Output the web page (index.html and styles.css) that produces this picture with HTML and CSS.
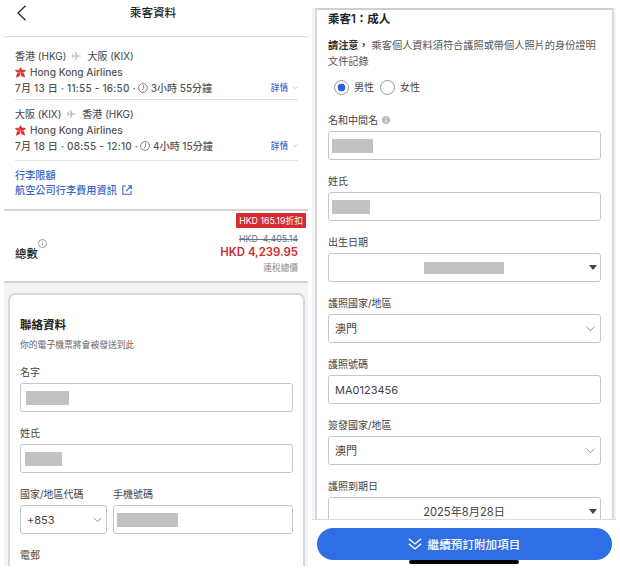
FILE: index.html
```html
<!DOCTYPE html>
<html lang="zh-Hant">
<head>
<meta charset="utf-8">
<title>乘客資料</title>
<link rel="stylesheet" href="styles.css">
</head>
<body>
<div class="screens">

	<!-- 行程及聯絡資料 -->
	<div class="phone phone-left">
		<div class="topbar">
			<svg class="back" width="10" height="16" viewBox="0 0 10 16"><path d="M8.5 .8 1 8l7.5 7.2" fill="none" stroke="#222" stroke-width="1.2"/></svg>
			<h1>乘客資料</h1>
		</div>

		<div class="trips">
			<div class="flight">
				<div class="route"><span>香港 (HKG)</span>
					<svg class="plane" width="9" height="8" viewBox="0 0 9 8"><path d="M0 1.8h.8L2 3.4h1.8L2.8 0h.9l2.2 3.4h2.2q.9.1.9.6t-.9.6H5.9L3.7 8h-.9l1-3.4H2L.8 6.2H0L.7 4z" fill="#b9bcc2"/></svg>
					<span>大阪 (KIX)</span></div>
				<div class="airline">
					<svg width="11" height="11" viewBox="0 0 11 10"><path d="M5.5 4.8 4 2.4 5.6 0l1.5 2.4zM5.7 4.9 7.2 2.6l3.6.1L9 4.8zM5.7 5.2l3.1.7 1 3.9-3.3-1.4zM5.3 5.2 4.5 8.4 1.2 9.9l1-4zM5.3 4.9 2 4.8.1 2.6l3.6.1z" fill="#d92d35" stroke="#d92d35" stroke-width=".4"/></svg>
					<span>Hong Kong Airlines</span></div>
				<div class="times"><span class="t1">7月 13 日 · 11:55 - 16:50 ·</span>
					<svg width="10" height="10" viewBox="0 0 10 10" fill="none" stroke="#666" stroke-width=".8"><circle cx="5" cy="5" r="4.4"/><path d="M5.6 2.2v3L4 7.2"/></svg>
					<span class="t2">3小時 55分鐘</span>
					<a class="detail">詳情</a>
					<svg class="mini" width="5" height="4" viewBox="0 0 5 4"><path d="M.3.7l2.2 2L4.7.7" fill="none" stroke="#a9bcd8" stroke-width=".8"/></svg></div>
			</div>
			<div class="flight second">
				<div class="route"><span>大阪 (KIX)</span>
					<svg class="plane" width="9" height="8" viewBox="0 0 9 8"><path d="M0 1.8h.8L2 3.4h1.8L2.8 0h.9l2.2 3.4h2.2q.9.1.9.6t-.9.6H5.9L3.7 8h-.9l1-3.4H2L.8 6.2H0L.7 4z" fill="#b9bcc2"/></svg>
					<span>香港 (HKG)</span></div>
				<div class="airline">
					<svg width="11" height="11" viewBox="0 0 11 10"><path d="M5.5 4.8 4 2.4 5.6 0l1.5 2.4zM5.7 4.9 7.2 2.6l3.6.1L9 4.8zM5.7 5.2l3.1.7 1 3.9-3.3-1.4zM5.3 5.2 4.5 8.4 1.2 9.9l1-4zM5.3 4.9 2 4.8.1 2.6l3.6.1z" fill="#d92d35" stroke="#d92d35" stroke-width=".4"/></svg>
					<span>Hong Kong Airlines</span></div>
				<div class="times"><span class="t1">7月 18 日 · 08:55 - 12:10 ·</span>
					<svg width="10" height="10" viewBox="0 0 10 10" fill="none" stroke="#666" stroke-width=".8"><circle cx="5" cy="5" r="4.4"/><path d="M5.6 2.2v3L4 7.2"/></svg>
					<span class="t2">4小時 15分鐘</span>
					<a class="detail">詳情</a>
					<svg class="mini" width="5" height="4" viewBox="0 0 5 4"><path d="M.3.7l2.2 2L4.7.7" fill="none" stroke="#a9bcd8" stroke-width=".8"/></svg></div>
			</div>
			<div class="links">
				<a>行李限額</a>
				<a>航空公司行李費用資訊
					<svg width="10" height="10" viewBox="0 0 10 10" fill="none" stroke="#3566c8" stroke-width="1.1"><path d="M4 1H.8v8.2H9V6M6 .8h3.3V4M9.2.9 4.2 6"/></svg></a>
			</div>
		</div>

		<div class="total">
			<div class="total-name">總數<svg width="9" height="9" viewBox="0 0 9 9" fill="none" stroke="#777" stroke-width=".7"><circle cx="4.5" cy="4.5" r="4"/><path d="M4.5 3.9v2.6M4.5 2.3v.8"/></svg></div>
			<div class="prices">
				<span class="discount">HKD 165.19折扣</span>
				<span class="was">HKD&nbsp; 4,405.14</span>
				<span class="now">HKD 4,239.95</span>
				<span class="tax">連稅總價</span>
			</div>
		</div>

		<div class="backdrop">
			<div class="card contact">
				<h2>聯絡資料</h2>
				<p class="sub">你的電子機票將會被發送到此</p>
				<div class="field"><label>名字</label><div class="input"><i class="mask m1"></i></div></div>
				<div class="field"><label>姓氏</label><div class="input"><i class="mask m2"></i></div></div>
				<div class="pair">
					<div class="field code"><label>國家/地區代碼</label><div class="input"><span class="latin">+853</span>
						<svg class="chev" width="9" height="6" viewBox="0 0 9 6"><path d="M.6.8 4.5 4.6 8.4.8" fill="none" stroke="#888" stroke-width=".9"/></svg></div></div>
					<div class="field tel"><label>手機號碼</label><div class="input"><i class="mask m3"></i></div></div>
				</div>
				<div class="field"><label>電郵</label></div>
			</div>
		</div>
	</div>

	<!-- 乘客表格 -->
	<div class="phone phone-right">
		<div class="backdrop">
			<div class="card passenger">
				<h2>乘客1：成人</h2>
				<p class="notice"><b>請注意，</b> 乘客個人資料須符合護照或帶個人照片的身份證明文件記錄</p>
				<div class="gender"><i class="radio on"></i><span>男性</span><i class="radio"></i><span>女性</span></div>
				<div class="field"><label>名和中間名 <svg width="8" height="8" viewBox="0 0 8 8"><circle cx="4" cy="4" r="4" fill="#b6bac2"/><path d="M4 3.4v3M4 1.5v1.1" stroke="#fff" stroke-width="1.1"/></svg></label><div class="input"><i class="mask m4"></i></div></div>
				<div class="field"><label>姓氏</label><div class="input"><i class="mask m5"></i></div></div>
				<div class="field"><label>出生日期</label><div class="input date"><i class="mask m6"></i><i class="arrow"></i></div></div>
				<div class="field"><label>護照國家/地區</label><div class="input"><span>澳門</span>
					<svg class="chev" width="9" height="6" viewBox="0 0 9 6"><path d="M.6.8 4.5 4.6 8.4.8" fill="none" stroke="#888" stroke-width=".9"/></svg></div></div>
				<div class="field"><label>護照號碼</label><div class="input"><span class="latin">MA0123456</span></div></div>
				<div class="field"><label>簽發國家/地區</label><div class="input"><span>澳門</span>
					<svg class="chev" width="9" height="6" viewBox="0 0 9 6"><path d="M.6.8 4.5 4.6 8.4.8" fill="none" stroke="#888" stroke-width=".9"/></svg></div></div>
				<div class="field"><label>護照到期日</label><div class="input date"><span class="expiry">2025年8月28日</span><i class="arrow"></i></div></div>
			</div>
		</div>
		<div class="footer">
			<button class="next">
				<svg width="14" height="12" viewBox="0 0 14 12" fill="none" stroke="#fff" stroke-width="1.3"><path d="M.8.8 7 6 13.2.8M.8 5.8 7 11l6.2-5.2"/></svg>
				<span>繼續預訂附加項目</span>
			</button>
			<i class="home"></i>
		</div>
	</div>

</div>
</body>
</html>
```
FILE: styles.css
```css
* {
	box-sizing: border-box;
}
body {
	margin: 0;
	background: #fff;
	color: #444;
	font-family: Inter, "Noto Sans CJK TC", sans-serif;
	font-size: 10px;
	line-height: 16px;
}
h1, h2, p {
	margin: 0;
}
svg {
	flex: none;
}
.screens {
	display: flex;
	gap: 4px;
	width: 620px;
	height: 570px;
	padding-left: 4px;
	overflow: hidden;
}
.phone {
	display: flex;
	flex-direction: column;
	width: 304px;
	overflow: hidden;
}
.phone-left {
	height: 566px;
}
.phone-right {
	height: 570px;
	padding-top: 8px;
}

/* header */
.topbar {
	display: flex;
	align-items: center;
	height: 37px;
	padding: 0 13px 10px;
	border-bottom: 1px solid #d9dbde;
}
.topbar h1 {
	flex: 1;
	padding-right: 16px;
	text-align: center;
	font-size: 11.6px;
	font-weight: 500;
	color: #222;
}

/* flights */
.trips {
	height: 174px;
	padding: 11px 10px 0 11px;
	border-bottom: 2px solid #d3d5d9;
}
.flight {
	height: 52px;
	border-bottom: 1px solid #e0e1e6;
}
.second {
	height: 61px;
	padding-top: 6px;
}
.route, .airline, .times {
	display: flex;
	align-items: center;
	height: 16px;
	white-space: nowrap;
}
.route {
	gap: 6px;
}
.airline {
	gap: 4px;
	font-size: 10.1px;
	font-weight: 500;
	color: #555;
}
.times {
	height: 15px;
	color: #555;
	font-weight: 500;
}
.t1 {
	letter-spacing: .22px;
}
.times svg {
	margin: 0 3px 0 2px;
}
.detail {
	margin-left: auto;
	font-size: 8.6px;
	color: #3566c8;
}
.times .mini {
	margin: 0 0 0 5px;
}
.links {
	padding-top: 6px;
	font-weight: 500;
	color: #3566c8;
}
.links a {
	display: flex;
	align-items: center;
	gap: 5px;
	height: 15px;
	font-size: 10.2px;
}

/* total */
.total {
	display: flex;
	justify-content: space-between;
	height: 72px;
	border-bottom: 2px solid #d3d5d9;
}
.total-name {
	display: flex;
	padding: 34px 0 0 11px;
	font-size: 11.4px;
	font-weight: 500;
	line-height: 18px;
	color: #222;
}
.total-name svg {
	margin: -6px 0 0 0;
}
.prices {
	display: flex;
	flex-direction: column;
	align-items: flex-end;
	padding: 2px 1px 0 0;
}
.discount {
	height: 15px;
	margin-right: 1px;
	padding: 0 3px;
	border-radius: 1px;
	background: #d62b30;
	color: #fff;
	font-size: 8.8px;
	line-height: 15px;
}
.was, .now, .tax {
	margin-right: 9px;
}
.was {
	margin-top: 4px;
	font-size: 8.8px;
	line-height: 13px;
	text-decoration: line-through;
	color: #667485;
}
.now {
	font-size: 11.4px;
	font-weight: 600;
	line-height: 14px;
	color: #cc2b30;
}
.tax {
	margin-top: 2px;
	font-size: 8.7px;
	line-height: 14px;
	color: #888;
}

/* cards */
.backdrop {
	flex: 1;
	min-height: 0;
	overflow: hidden;
	background: #f4f4f6;
}
.card {
	background: #fff;
	border: 2px solid #d6d8dd;
}
.contact {
	height: 290px;
	margin: 10px 3px 0 4px;
	padding: 22px 10px 0 10px;
	border-radius: 7px;
}
.card h2 {
	font-size: 11.5px;
	font-weight: 600;
	color: #222;
}
.sub {
	margin: 4px 0 11px;
	font-size: 8.8px;
	color: #666;
}
.field {
	height: 61px;
}
.field label {
	display: flex;
	align-items: center;
	gap: 4px;
	height: 16px;
	margin-bottom: 3px;
	white-space: nowrap;
}
.input {
	display: flex;
	align-items: center;
	height: 29px;
	padding: 0 6px;
	border: 1px solid #c3c6ca;
	border-radius: 3px;
	font-size: 11px;
}
.chev {
	margin-left: auto;
	margin-right: -1px;
}
.code .chev {
	margin-right: -2px;
}
.pair {
	display: flex;
	gap: 6px;
}
.code {
	width: 87px;
}
.tel {
	flex: 1;
}

/* masked values */
.mask {
	height: 14px;
	margin-left: -1px;
	background: #c2c2c2;
}
.m1 { width: 43px; }
.m2 { width: 37px; margin-left: -2px; }
.m3 { width: 61px; margin-left: -3px; }
.m4 { width: 41px; margin-left: -3px; }
.m5 { width: 38px; margin-left: -3px; }
.m6 { width: 80px; height: 12px; margin-left: auto; }

/* passenger */
.passenger {
	height: 530px;
	margin: 0 2px 0 3px;
	padding: 1px 11px 0 11px;
	border-top-color: #cfcfd2;
}
.notice {
	height: 32px;
	margin: 10px 0 0;
	font-size: 10.2px;
	line-height: 16px;
	color: #555;
}
.notice b {
	font-weight: 600;
	color: #333;
}
.gender {
	display: flex;
	align-items: center;
	height: 16px;
	margin: 10px 0 17px 6px;
}
.gender span {
	margin: 0 6px 0 5px;
}
.radio {
	width: 15px;
	height: 15px;
	border: 1px solid #9299a5;
	border-radius: 50%;
}
.on {
	background: radial-gradient(circle, #2f62d9 3.6px, #fff 4.2px);
}
.date {
	padding-left: 10px;
}
.date span {
	margin-left: auto;
	font-size: 11.2px;
}
.arrow {
	margin-left: auto;
	margin-right: -3px;
	border: 4px solid transparent;
	border-top: 5px solid #444;
	border-bottom: 0;
}

/* bottom bar */
.footer {
	display: flex;
	flex-direction: column;
	align-items: center;
	height: 51px;
	padding-top: 8px;
	border-top: 1px solid #d9dbde;
}
.next {
	display: flex;
	justify-content: center;
	align-items: center;
	gap: 6px;
	width: 295px;
	height: 32px;
	padding: 0;
	border: 0;
	border-radius: 16px;
	background: #2f6fe4;
	color: #fff;
	font: 500 11.6px Inter, "Noto Sans CJK TC", sans-serif;
}
.home {
	width: 110px;
	height: 4px;
	border-radius: 2px;
	background: #000;
}
```
